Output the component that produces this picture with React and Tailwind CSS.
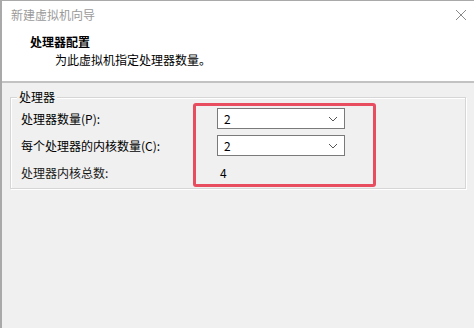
export default function App() {
  const font = { fontFamily: '"Noto Sans CJK SC", "Microsoft YaHei", sans-serif' };
  const Chevron = () => (
    <svg width="10" height="6" viewBox="0 0 10 6" className="text-[#555]">
      <path d="M1 1 L5 5 L9 1" fill="none" stroke="currentColor" strokeWidth="1" />
    </svg>
  );
  const Select = ({ value }) => (
    <div className="w-[128px] h-[21px] bg-white border border-[#7a7a7a] flex items-center justify-between pl-[6px] pr-[6px] text-[12px] text-black">
      <span>{value}</span>
      <Chevron />
    </div>
  );
  return (
    <div
      className="relative w-[474px] h-[328px] bg-[#f0f0f0] border-t border-l-2 border-[#a9a9a9] overflow-hidden text-[12px] text-black"
      style={font}
    >
      <div className="h-[82px] bg-white border-b-2 border-[#c2c2c2] relative">
        <div className="pt-[6px] pl-[9px] text-[12px] leading-[16px] text-[#9a9a9a]">新建虚拟机向导</div>
        <div className="absolute right-[7px] top-[8px] text-[#8a8a8a]">
          <svg width="12" height="12" viewBox="0 0 12 12">
            <path d="M1 1 L11 11 M11 1 L1 11" stroke="currentColor" strokeWidth="1" />
          </svg>
        </div>
        <div className="pt-[11px] pl-[28px] font-bold leading-[16px]">处理器配置</div>
        <div className="pt-[2px] pl-[53px] leading-[16px]">为此虚拟机指定处理器数量。</div>
      </div>
      <div className="px-[8px] pt-[6px]">
        <div className="relative border border-[#d6d6d6] shadow-[inset_1px_1px_0_#ffffff,1px_1px_0_#ffffff] mt-[8px] h-[92px] pl-[10px] pt-[10px]">
          <div className="absolute -top-[9px] left-[6px] px-[2px] bg-[#f0f0f0] leading-[16px]">处理器</div>
          <div className="flex flex-col gap-[6px]">
            <div className="flex items-center h-[21px]">
              <div className="w-[196px]">处理器数量(P):</div>
              <Select value="2" />
            </div>
            <div className="flex items-center h-[21px]">
              <div className="w-[196px]">每个处理器的内核数量(C):</div>
              <Select value="2" />
            </div>
            <div className="flex items-center h-[21px]">
              <div className="w-[196px] text-[#1a1a1a]">处理器内核总数:</div>
              <div className="pl-[3px]">4</div>
            </div>
          </div>
        </div>
      </div>
      <div className="absolute left-[191px] top-[102px] w-[183px] h-[84px] border-[3px] border-[#e84c5f] rounded-[3px]" />
    </div>
  );
}
